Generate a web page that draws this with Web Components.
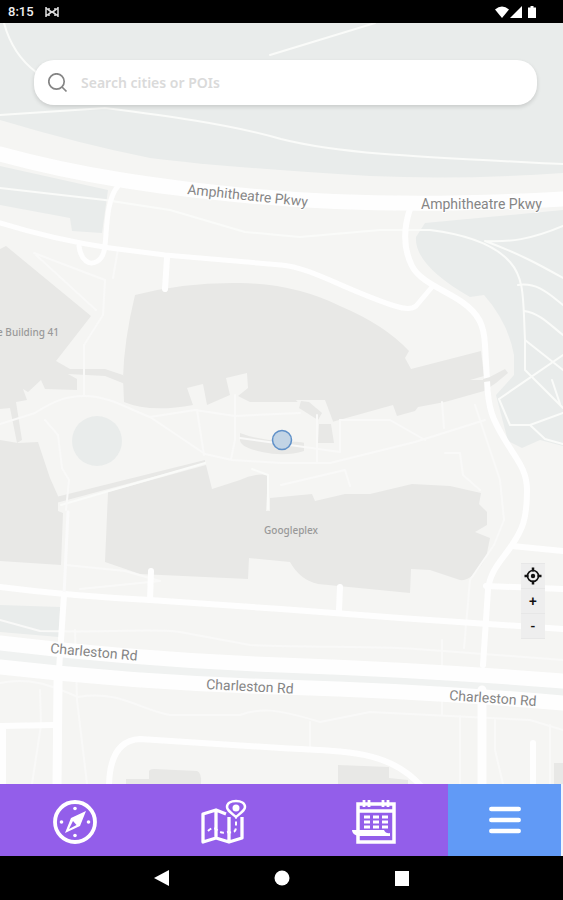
<!DOCTYPE html>
<html lang="en">
<head>
<meta charset="utf-8">
<meta name="viewport" content="width=device-width, initial-scale=1">
<title>Map</title>
<style>
  body {
    margin: 0;
    background: #f5f5f3;
    font-family: Roboto, "Liberation Sans", sans-serif;
  }
  map-app { min-height: 100vh; }
</style>
</head>
<body>
<map-app>
  <status-bar slot="status">8:15</status-bar>
  <map-view>
    <search-box slot="top" placeholder="Search cities or POIs"></search-box>
    <map-controls slot="controls"></map-controls>
  </map-view>
  <tab-bar slot="tabs"></tab-bar>
  <system-nav slot="system"></system-nav>
</map-app>

<script>
// Small helper so every element sets up its shadow root the same way
class BaseElement extends HTMLElement {
  constructor() {
    super();
    this.shadow = this.attachShadow({ mode: 'open' });
  }
  connectedCallback() {
    this.shadow.innerHTML = this.render();
  }
}

// Page frame: bars at the top and bottom, map takes what is left
class MapApp extends BaseElement {
  render() {
    return `
      <style>
        :host { display: flex; flex-direction: column; }
        main { flex: 1; display: flex; }
      </style>
      <slot name="status"></slot>
      <main><slot></slot></main>
      <slot name="tabs"></slot>
      <slot name="system"></slot>
    `;
  }
}

class StatusBar extends BaseElement {
  render() {
    return `
      <style>
        :host {
          display: flex;
          align-items: center;
          gap: 10px;
          height: 23px;
          padding: 0 26px 0 8px;
          box-sizing: border-box;
          background: #000;
          color: #f0f0f0;
          font-size: 13px;
          font-weight: 500;
        }
        svg { display: block; }
        .right { margin-left: auto; }
      </style>
      <span><slot></slot></span>
      <svg width="16" height="12" viewBox="0 0 16 12" fill="none" stroke="#ddd" stroke-width="1.500">
        <path d="M2 1v10M2 2l5 4-5 4M14 1v10M14 2L9 6l5 4M5 2v2l3 2 3-2V2M5 10V8l3-2 3 2v2"/>
      </svg>
      <svg class="right" width="42" height="14" viewBox="0 0 42 14" fill="#fff">
        <path d="M0 4.500Q7-1.500 14 4.500L7 13z"/>
        <path d="M27 1v12H15z"/>
        <path d="M35.500 1h3v1.500h2.500V13h-8V2.500h2.500z"/>
      </svg>
    `;
  }
}

class SearchBox extends BaseElement {
  render() {
    return `
      <style>
        :host { display: block; }
        label {
          display: flex;
          align-items: center;
          gap: 13px;
          height: 45px;
          padding: 0 14px;
          box-sizing: border-box;
          background: #fff;
          border-radius: 20px;
          box-shadow: 0 2px 4px rgba(0, 0, 0, .14);
        }
        svg { flex: none; display: block; }
        input {
          flex: 1;
          min-width: 0;
          padding: 0;
          border: 0;
          outline: 0;
          background: none;
          color: #555;
          font: 600 14px "Noto Sans", sans-serif;
        }
        input::placeholder { color: #dadada; opacity: 1; }
      </style>
      <label>
        <svg width="20" height="20" viewBox="0 0 20 20" fill="none" stroke="#858585" stroke-width="1.700">
          <circle cx="8.500" cy="8.500" r="7.700"/><path d="M14 14l4.500 4.500"/>
        </svg>
        <input type="search" aria-label="Search" placeholder="${this.getAttribute('placeholder')}">
      </label>
    `;
  }
}

class MapControls extends BaseElement {
  render() {
    return `
      <style>
        :host {
          display: grid;
          grid-auto-rows: 24px;
          gap: 1px;
          width: 24px;
          padding: 1px 0;
          background: #e7e7e7;
        }
        button {
          display: grid;
          place-items: center;
          padding: 0;
          border: 0;
          background: #eee;
          color: #111;
          font: 500 14px Roboto, sans-serif;
        }
      </style>
      <button aria-label="My location">
        <svg width="18" height="18" viewBox="0 0 18 18" fill="none" stroke="#111" stroke-width="1.600">
          <circle cx="9" cy="9" r="5.500"/>
          <circle cx="9" cy="9" r="2.200" fill="#111" stroke="none"/>
          <path d="M9 .5v4M9 13.500v4M.5 9h4M13.500 9h4" stroke-width="2.500"/>
        </svg>
      </button>
      <button>+</button>
      <button>-</button>
    `;
  }
}

class MapView extends BaseElement {
  render() {
    return `
      <style>
        :host {
          flex: 1;
          position: relative;
          display: flex;
          flex-direction: column;
          min-height: 600px;
          padding: 37px 26px 145px 34px;
          box-sizing: border-box;
          overflow: hidden;
        }
        .map { position: absolute; inset: 0; width: 100%; height: 100%; }
        ::slotted([slot="top"]) { position: relative; }
        ::slotted([slot="controls"]) {
          position: absolute;
          right: 18px;
          bottom: 145px;
        }
        .land { fill: #e9eceb; }
        .median { fill: #f0f2f1; }
        .building { fill: #e8e8e6; }
        .path, .road { fill: none; stroke-linecap: round; stroke-linejoin: round; }
        .path { stroke: #fafbf9; stroke-width: 2; }
        .path.faint { stroke: #f9f9f8; }
        .road { stroke: #fefefe; stroke-width: 6; }
        .road .major { stroke-width: 15; }
        .road .mid { stroke-width: 9; }
        .road .minor { stroke-width: 5; }
        .road .lane { stroke-width: 3; stroke: #fafafa; }
        text { font-family: Roboto, sans-serif; fill: #858585; stroke: #fff; stroke-width: 2; paint-order: stroke; }
        .street { font-size: 14px; }
        .place { font: 500 10px "Noto Sans", sans-serif; fill: #999; stroke: #e8e8e6; }
      </style>
      <svg class="map" viewBox="0 23 563 761" preserveAspectRatio="xMidYMid slice">
        <rect y="23" width="563" height="761" fill="#f5f5f3"/>

        <!-- parks and water -->
        <g class="land">
          <path d="M0 23H563V173Q460 180 370 176Q220 167 150 158Q80 144 0 120z"/>
          <path d="M0 166L108 190 102 233 72 231 70 218 0 205z"/>
          <path d="M425 223L563 210V446L540 440 522 448 508 441 496 395 514 375 514 355Q508 322 484 295L470 297Q414 265 416 237z"/>
          <path d="M0 605L60 607 59 637 0 632z"/>
        </g>

        <!-- buildings -->
        <g class="building">
          <path d="M0 249L6 246 91 316 56 361 70 369H105L123 375 125 384 105 376 68 374 77 379V390L45 389 41 380 28 392 23 389 27 400 16 402 22 440 17 443 10 408 0 409z"/>
          <path d="M135 295Q185 282 240 283T340 306Q385 325 409 351L405 358 411 369 481 351 484 376 470 380H484L505 369 508 373 496 383 484 391 445 402 418 407 415 411 397 416 393 405 332 422 325 402H250L238 396 248 388 247 373 226 378 230 395 207 405 203 384 187 388 193 405Q150 413 124 402L123 378Q124 340 135 295z"/>
          <path d="M0 440L18 443 38 442 50 478 58 496 58 511 63 513 61 565 0 561z"/>
          <path d="M108 492L206 465 212 489 240 480Q254 473 268 475L266 511H270V498L312 494 315 501 345 494 370 494 412 484 450 486 481 493 479 504 487 512V525L475 532 490 538 486 558Q472 582 460 580L430 570 411 569 410 593 318 584Q300 580 290 562L249 558 248 579 140 574 105 562z"/>
          <path d="M149 771Q150 769 154 769L197 771Q202 773 201 784H126V779H149z"/>
          <path d="M338 765L389 767V778L408 780V784H338zM554 763H563V784H554z"/>
          <path d="M56 497L205 460V463L56 503z"/>
          <path d="M240 433Q258 440 282 441T304 443V451Q285 457 262 452T240 439z"/>
        </g>
        <!-- courtyard at the centre, with its two small blocks -->
        <path d="M296 400L325 400 334 424 316 424z" fill="#f5f5f3"/>
        <path class="building" d="M301 401L309 402 322 413 318 420 299 408zM319 424L331 424 334 443H318z"/>
        <circle class="land" cx="97" cy="441" r="25"/>

        <!-- footpaths -->
        <g class="path">
          <path d="M4 23C10 45 20 60 36 72M270 55L375 23M0 115L105 108C160 115 230 124 281 139C340 154 420 157 563 164"/>
          <path d="M0 188L105 200 170 210 245 232 300 237 380 230 430 230C470 235 495 245 510 262S523 300 525 340V370L563 408"/>
          <path d="M485 241C510 242 530 240 563 226M485 241C520 254 540 265 563 278M518 285C538 282 550 295 563 305M524 311C540 313 550 325 563 335M525 340L563 370M499 399L563 355M499 399L510 425H530L563 413M530 425L545 439 563 444M552 380L560 404"/>
          <path d="M61 505L205 463M252 469L268 475V509"/>
        </g>
        <g class="path faint">
          <path d="M34 253L105 280 103 315 84 345V396M36 255L96 310M118 249L113 278"/>
          <path d="M0 424L35 413C55 400 68 396 84 396C110 396 130 410 150 417L205 454 232 460 281 463 330 463 415 442 485 420M150 417L195 410 235 416 300 413M340 420L390 420 425 440"/>
          <path d="M45 420L58 435 62 468 69 480 66 510M197 410L204 455M235 395V440L231 459"/>
          <path d="M240 438L340 452V420M281 485L345 470 350 486M317 415V462M442 402L444 428"/>
          <path d="M445 453H460L463 475 480 490M475 405L485 435 500 480 504 520 494 545 470 580 464 648"/>
          <path d="M66 565L125 571 160 581 80 589M0 620L40 631C120 633 150 628 180 632L250 645C320 648 380 645 430 650L563 660M0 683C30 677 50 685 78 697C120 690 140 710 170 715H240C260 708 275 708 320 722L370 712 450 716 530 720 563 730"/>
          <path d="M40 690L41 725 32 784M75 630L77 700 87 784M442 640V715M460 716V784M495 720V750L503 784M310 722V748M550 725V784"/>
        </g>

        <!-- roads -->
        <path class="median" d="M0 645Q140 664 281 670T563 686V700Q420 690 281 686T0 665z"/>
        <g class="road">
          <path class="major" d="M0 154C80 176 160 187 240 195S420 207 563 199"/>
          <path class="minor" d="M0 223Q55 240 110 248L165 255 281 265C310 267 350 292 395 306Q410 311 416 306L432 287"/>
          <path class="minor" d="M118 186C106 200 107 230 105 245C104 262 92 266 86 261Q80 256 79 246"/>
          <path d="M167 258L165 289"/>
          <path d="M410 209C403 230 404 250 412 266S445 290 462 302S484 325 485 345L487 380C488 410 493 420 505 440S527 470 527 490C527 520 522 530 512 545S490 570 488 590L483 665"/>
          <path d="M512 546L563 551M486 586L563 589M151 571L150 600M340 587L339 610"/>
          <path d="M0 587Q70 596 150 600L281 609 400 618 563 629"/>
          <path class="lane" d="M68 512L64 595"/>
          <path d="M64 595L58 685"/>
          <path class="mid" d="M58 680L57 790M482 690V790"/>
          <path class="major" d="M0 643Q140 660 281 665T563 681"/>
          <path class="major" d="M0 667Q140 683 281 687T563 703"/>
          <path d="M0 726L55 725M3 728V790"/>
          <path d="M109 788C109 753 122 740 140 739L281 748C350 752 390 750 423 788M533 743V790"/>
        </g>
        <path class="building" d="M483 379L490 377 491 381 484 382z"/>

        <!-- labels -->
        <text class="street" transform="translate(187 194) rotate(6)">Amphitheatre Pkwy</text>
        <text class="street" transform="translate(421 209)">Amphitheatre Pkwy</text>
        <text class="street" transform="translate(50 653) rotate(5)">Charleston Rd</text>
        <text class="street" transform="translate(206 689) rotate(3)">Charleston Rd</text>
        <text class="street" transform="translate(449 700) rotate(4)">Charleston Rd</text>
        <text class="place" x="59" y="336" text-anchor="end">e Building 41</text>
        <text class="place" x="291" y="534" text-anchor="middle">Googleplex</text>

        <circle cx="282" cy="440" r="9.500" fill="#c2d4e5" stroke="#5f90c8" stroke-width="1.500"/>
      </svg>
      <slot name="top"></slot>
      <slot name="controls"></slot>
    `;
  }
}

class TabBar extends BaseElement {
  render() {
    return `
      <style>
        :host { display: block; padding-right: 2px; background: #f1f5fc; }
        nav { display: flex; height: 72px; }
        .tabs { flex: 4; display: flex; background: #935eea; }
        button {
          flex: 1;
          display: grid;
          place-items: center;
          padding: 0 0 0 1px;
          border: 0;
          background: none;
        }
        .menu { background: #619af6; }
        .tabs svg { margin-top: 4px; }
      </style>
      <nav>
        <div class="tabs">
          <button aria-label="Explore">
            <svg width="44" height="44" viewBox="0 0 44 44" fill="#fff">
              <circle cx="22" cy="22" r="20" fill="none" stroke="#fff" stroke-width="3.800"/>
              <path fill-rule="evenodd" d="M33 11L27 26 12 33 18 18zM20 21L16 29 23.500 25z"/>
              <circle cx="22" cy="8.500" r="1.800"/><circle cx="22" cy="35.500" r="1.800"/>
              <circle cx="8.500" cy="22" r="1.800"/><circle cx="35.500" cy="22" r="1.800"/>
            </svg>
          </button>
          <button aria-label="Trips">
            <svg width="46" height="46" viewBox="0 0 46 46" fill="none" stroke="#fff" stroke-width="3.300">
              <path d="M25 15L15 11 2 15V43L15 39 28 43 41 39V18M15 11V39M28 18V43" stroke-linejoin="round"/>
              <path d="M7 32Q12 27 16 31T27 33Q35 35 35 28V19" stroke-width="2" stroke-dasharray="4 3"/>
              <path d="M35 18C29 13 26 11 26 8C26 4 30 2 35 2S44 4 44 8C44 11 41 13 35 18z" fill="#935eea" stroke-width="2.500"/>
              <circle cx="35" cy="9" r="3.500" fill="#fff" stroke="none"/>
            </svg>
          </button>
          <button aria-label="Calendar">
            <svg width="46" height="46" viewBox="0 0 46 46" fill="none" stroke="#fff" stroke-width="3.500">
              <path d="M7 34V5H43V43H7V36M7 12H43"/>
              <path d="M13 1V8M18 1V8M32 1V8M37 1V8" stroke-width="2.800"/>
              <path d="M13 18H19M22 18H28M31 18H37M13 23H19M22 23H28M31 23H37M13 28H19M22 28H28M31 28H37" stroke-width="3.200"/>
              <path d="M1 31H33Q35 35 39 34V37H8Q1 36 1 31z" fill="#fff" stroke="none"/>
            </svg>
          </button>
        </div>
        <button class="menu" aria-label="Menu">
          <svg width="32" height="28" viewBox="0 0 32 28" stroke="#fff" stroke-width="4.500" stroke-linecap="round">
            <path d="M2.300 3H29.700M2.300 14H29.700M2.300 25H29.700"/>
          </svg>
        </button>
      </nav>
    `;
  }
}

class SystemNav extends BaseElement {
  render() {
    return `
      <style>
        :host {
          display: flex;
          justify-content: center;
          align-items: center;
          gap: 104px;
          height: 44px;
          background: #000;
        }
        button { padding: 0; border: 0; background: none; }
        svg { display: block; fill: #fff; }
      </style>
      <button aria-label="Back"><svg width="16" height="16"><path d="M15 0V16L0 8z"/></svg></button>
      <button aria-label="Home"><svg width="16" height="16"><circle cx="8" cy="8" r="7.500"/></svg></button>
      <button aria-label="Recents"><svg width="16" height="16"><rect x="1" y="1" width="14" height="15"/></svg></button>
    `;
  }
}

customElements.define('map-app', MapApp);
customElements.define('status-bar', StatusBar);
customElements.define('search-box', SearchBox);
customElements.define('map-controls', MapControls);
customElements.define('map-view', MapView);
customElements.define('tab-bar', TabBar);
customElements.define('system-nav', SystemNav);
</script>
</body>
</html>
